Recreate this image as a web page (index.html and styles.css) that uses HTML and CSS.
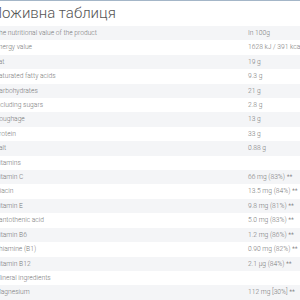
FILE: index.html
```
<!DOCTYPE html>
<html>
<head>
<meta charset="utf-8">
<link rel="stylesheet" href="styles.css">
</head>
<body>
<div class="page">
  <h2 class="title">Поживна таблиця</h2>
  <table class="nutri">
    <tr><td>The nutritional value of the product</td><td>In 100g</td></tr>
    <tr><td>Energy value</td><td>1628 kJ / 391 kcal</td></tr>
    <tr><td>Fat</td><td>19 g</td></tr>
    <tr><td>Saturated fatty acids</td><td>9.3 g</td></tr>
    <tr><td>Carbohydrates</td><td>21 g</td></tr>
    <tr><td>including sugars</td><td>2.8 g</td></tr>
    <tr><td>Roughage</td><td>13 g</td></tr>
    <tr><td>Protein</td><td>33 g</td></tr>
    <tr><td>Salt</td><td>0.88 g</td></tr>
    <tr><td>Vitamins</td><td></td></tr>
    <tr><td>Vitamin C</td><td>66 mg (83%) **</td></tr>
    <tr><td>Niacin</td><td>13.5 mg (84%) **</td></tr>
    <tr><td>Vitamin E</td><td>9.8 mg (81%) **</td></tr>
    <tr><td>Pantothenic acid</td><td>5.0 mg (83%) **</td></tr>
    <tr><td>Vitamin B6</td><td>1.2 mg (86%) **</td></tr>
    <tr><td>Thiamine (B1)</td><td>0.90 mg (82%) **</td></tr>
    <tr><td>Vitamin B12</td><td>2.1 µg (84%) **</td></tr>
    <tr><td>Mineral ingredients</td><td></td></tr>
    <tr><td>Magnesium</td><td>112 mg [30%] **</td></tr>
  </table>
</div>
</body>
</html>
```
FILE: styles.css
```
html, body { margin: 0; padding: 0; background: #fff; }
body { width: 300px; height: 300px; overflow: hidden; border-top: 1px solid #a4b6c8; box-sizing: border-box; }
.page { margin-left: -10px; width: 340px; font-family: Roboto, "Noto Sans", sans-serif; }
.title { margin: 0 0 0 1.5px; padding-top: 3px; height: 22px; font-size: 15px; font-weight: 300; line-height: 18px; color: #555; }
.nutri { border-collapse: collapse; width: 100%; margin-left: 5px; }
.nutri td { height: 14.4px; padding: 0; font-size: 6.7px; font-weight: 300; color: #777; line-height: 14.4px; }
.nutri td:first-child { width: 253px; }
.nutri tr:nth-child(odd) td { background: #f4f5f7; }
```
